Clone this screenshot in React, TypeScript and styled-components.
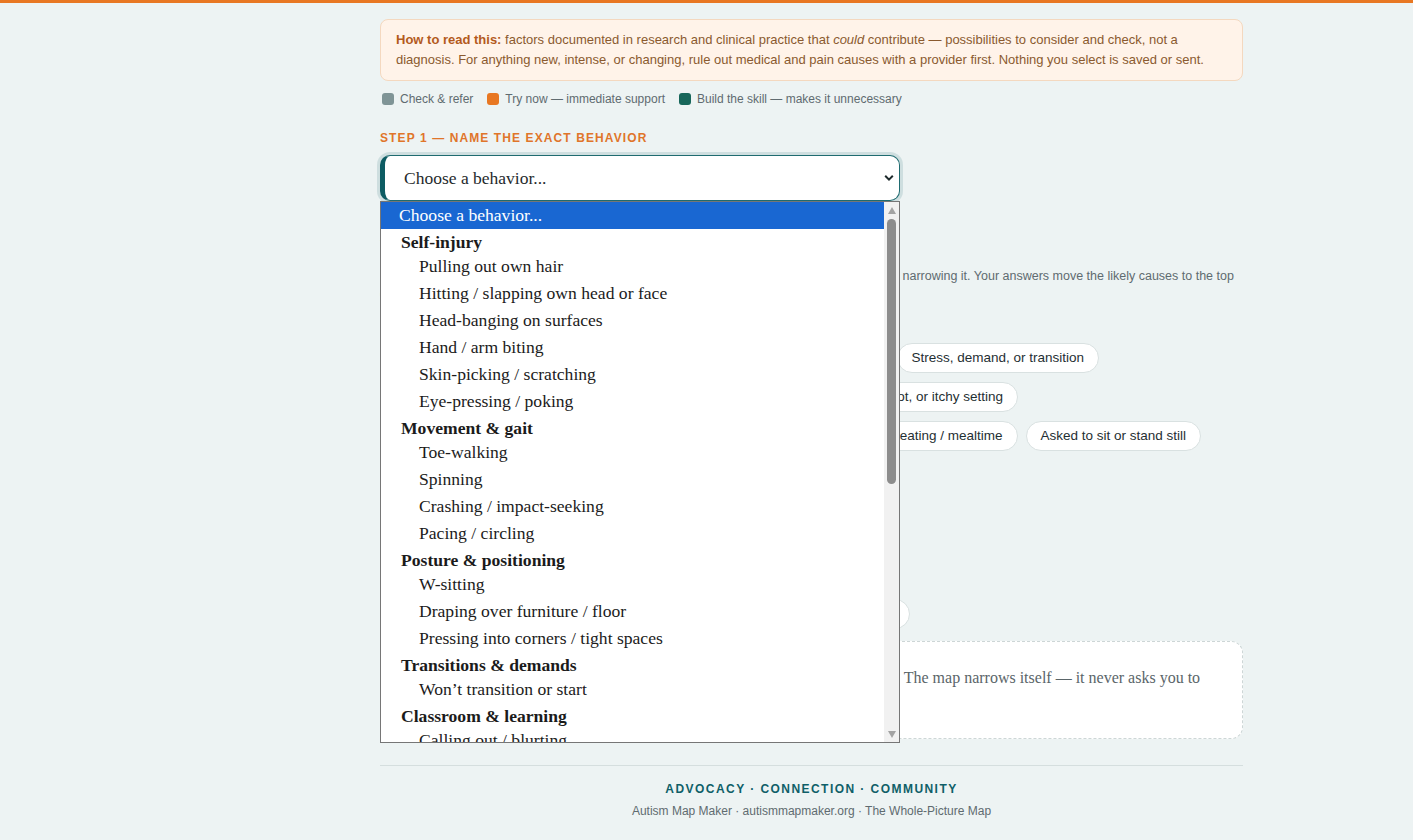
import React from "react";
import styled, { createGlobalStyle } from "styled-components";

const GlobalStyle = createGlobalStyle`
  html, body { margin: 0; padding: 0; background: #edf3f3; }
  body { font-family: "Liberation Sans", Arial, sans-serif; color: #1f2d30; }
  * { box-sizing: border-box; }
`;

const SERIF = `"Liberation Serif", "Times New Roman", serif`;

const TopBar = styled.div`
  height: 3px;
  background: #e87722;
`;

const Shell = styled.div`
  display: grid;
  grid-template-columns: 380px 863px 1fr;
`;

const Main = styled.main`
  grid-column: 2;
  padding: 16px 0 24px;
`;

const Notice = styled.div`
  background: #fff3e9;
  border: 1px solid #f4d8bf;
  border-radius: 8px;
  padding: 10px 15px;
  font-size: 13px;
  line-height: 20px;
  color: #8a5a2f;
  b { color: #b35a1d; }
`;

const Legend = styled.div`
  display: flex;
  gap: 14px;
  margin-top: 11px;
  padding-left: 2px;
  font-size: 12px;
  line-height: 14px;
  color: #5f6b70;
`;

const LegendItem = styled.span`
  display: inline-flex;
  align-items: center;
  gap: 6px;
`;

const Swatch = styled.i<{ $color: string }>`
  display: inline-block;
  width: 12px;
  height: 12px;
  border-radius: 3px;
  background: ${(p) => p.$color};
`;

const StepLabel = styled.div<{ $first?: boolean }>`
  margin-top: ${(p) => (p.$first ? 0 : 24)}px;
  font-size: 12px;
  line-height: 16px;
  font-weight: 700;
  letter-spacing: 1.1px;
  text-transform: uppercase;
  color: #e0752a;
`;

const PickerWrap = styled.div`
  position: relative;
  width: 520px;
  margin-top: 9px;
`;

const Picker = styled.select`
  appearance: none;
  display: block;
  width: 100%;
  height: 46px;
  padding: 0 36px 0 19px;
  background: #fff;
  border: 1px solid #1f6b70;
  border-left: 5px solid #0d5c63;
  border-radius: 10px;
  box-shadow: 0 0 0 3px rgba(20, 100, 108, 0.14);
  font-family: ${SERIF};
  font-size: 17.5px;
  color: #1f2a2c;
  outline: none;
`;

const Chevron = styled.svg`
  position: absolute;
  right: 6px;
  top: 19px;
  width: 10px;
  height: 8px;
  pointer-events: none;
`;

/* the open option list that drops over the page */
const Popup = styled.div`
  position: absolute;
  top: 100%;
  left: 0;
  width: 520px;
  height: 542px;
  z-index: 10;
  display: flex;
  background: #fff;
  border: 1px solid #767676;
`;

const OptionList = styled.div`
  flex: 1;
  overflow: hidden;
  font-family: ${SERIF};
  font-size: 17.6px;
  color: #1b1b1b;
`;

type RowKind = "active" | "group" | "item";

const Row = styled.div<{ $kind: RowKind }>`
  white-space: nowrap;
  ${(p) =>
    p.$kind === "active"
      ? `background:#1967d2;color:#fff;padding-left:18px;line-height:27px;`
      : p.$kind === "group"
      ? `font-weight:700;padding:3px 0 0 20px;line-height:21.1px;`
      : `padding-left:38px;line-height:27px;`}
`;

const ScrollTrack = styled.div`
  width: 15px;
  background: #f1f1f1;
  display: flex;
  flex-direction: column;
  align-items: center;
  padding: 5px 0 4px;
`;

const Arrow = styled.i<{ $down?: boolean }>`
  width: 0;
  height: 0;
  border-left: 4px solid transparent;
  border-right: 4px solid transparent;
  ${(p) => (p.$down ? "border-top: 7px solid #a3a3a3;" : "border-bottom: 7px solid #a3a3a3;")}
`;

const Thumb = styled.i`
  width: 9px;
  height: 265px;
  margin-top: 5px;
  border-radius: 4.5px;
  background: #8c8c8c;
`;

const TrackFill = styled.span`
  flex: 1;
`;

const Section = styled.section`
  margin-top: 30px;
`;

const Lead = styled.p`
  margin: 20px 0 0;
  font-size: 12.5px;
  line-height: 18px;
  color: #5f6b70;
`;

const Group = styled.div<{ $gap: number }>`
  margin-top: ${(p) => p.$gap}px;
`;

const GroupLabel = styled.div`
  font-size: 11px;
  line-height: 14px;
  font-weight: 700;
  letter-spacing: 1px;
  text-transform: uppercase;
  color: #5f6b70;
`;

const Chips = styled.div`
  display: flex;
  flex-wrap: wrap;
  gap: 9px 8px;
  margin-top: 11px;
`;

const Chip = styled.button`
  font-family: inherit;
  font-size: 13.5px;
  line-height: 16px;
  padding: 6px 14px;
  border: 1px solid #d9e1e1;
  border-radius: 15px;
  background: #fff;
  color: #1f2f33;
  cursor: pointer;
`;

const Placeholder = styled.div`
  margin-top: 12px;
  padding: 24px;
  background: #fff;
  border: 1px dashed #cdd6d6;
  border-radius: 12px;
  font-family: ${SERIF};
  font-size: 16px;
  line-height: 24px;
  color: #5a6569;
`;

const Footer = styled.footer`
  margin-top: 26px;
  border-top: 1px solid #d5dede;
  padding-top: 15px;
  text-align: center;
`;

const Motto = styled.div`
  font-size: 12px;
  line-height: 16px;
  font-weight: 700;
  letter-spacing: 1.45px;
  color: #0f5f68;
`;

const Credit = styled.div`
  margin-top: 6px;
  font-size: 12px;
  line-height: 16px;
  color: #5f6b70;
`;

type BehaviorGroup = { label: string; items: string[] };

const behaviors: BehaviorGroup[] = [
  {
    label: "Self-injury",
    items: [
      "Pulling out own hair",
      "Hitting / slapping own head or face",
      "Head-banging on surfaces",
      "Hand / arm biting",
      "Skin-picking / scratching",
      "Eye-pressing / poking",
    ],
  },
  {
    label: "Movement & gait",
    items: ["Toe-walking", "Spinning", "Crashing / impact-seeking", "Pacing / circling"],
  },
  {
    label: "Posture & positioning",
    items: ["W-sitting", "Draping over furniture / floor", "Pressing into corners / tight spaces"],
  },
  { label: "Transitions & demands", items: ["Won\u2019t transition or start"] },
  {
    label: "Classroom & learning",
    items: ["Calling out / blurting", "Leaving the seat", "Refusing written work"],
  },
];

const moments = [
  "Alone or with nothing to do",
  "Told no or a toy taken away",
  "Tired or achy",
  "Stress, demand, or transition",
  "Just after waking or before bed",
  "Attention goes to a sibling",
  "Loud, bright, hot, or itchy setting",
  "During seated work or screen time",
  "Washing or dressing",
  "Before or during eating / mealtime",
  "Asked to sit or stand still",
];

const places = ["At home", "At school", "In the car", "In public"];
const frequency = ["Several times a day", "Once a day", "A few times a week", "Now and then"];

export default function App() {
  return (
    <>
      <GlobalStyle />
      <TopBar />
      <Shell>
        <Main>
          <Notice>
            <b>How to read this:</b> factors documented in research and clinical practice that{" "}
            <i>could</i> contribute — possibilities to consider and check, not a diagnosis. For
            anything new, intense, or changing, rule out medical and pain causes with a provider
            first. Nothing you select is saved or sent.
          </Notice>

          <Legend>
            <LegendItem>
              <Swatch $color="#7f9496" />
              Check &amp; refer
            </LegendItem>
            <LegendItem>
              <Swatch $color="#e87722" />
              Try now — immediate support
            </LegendItem>
            <LegendItem>
              <Swatch $color="#17665a" />
              Build the skill — makes it unnecessary
            </LegendItem>
          </Legend>

          <StepLabel>Step 1 — Name the exact behavior</StepLabel>
          <PickerWrap>
            <Picker defaultValue="" aria-label="Behavior">
              <option value="">Choose a behavior...</option>
              {behaviors.map((g) => (
                <optgroup key={g.label} label={g.label}>
                  {g.items.map((it) => (
                    <option key={it}>{it}</option>
                  ))}
                </optgroup>
              ))}
            </Picker>
            <Chevron viewBox="0 0 10 8">
              <path d="M1.2 1.8 L5 5.6 L8.8 1.8" fill="none" stroke="#1e2a2c" strokeWidth="2" />
            </Chevron>

            <Popup role="listbox">
              <OptionList>
                <Row $kind="active">Choose a behavior...</Row>
                {behaviors.map((g) => (
                  <React.Fragment key={g.label}>
                    <Row $kind="group">{g.label}</Row>
                    {g.items.map((it) => (
                      <Row $kind="item" key={it}>
                        {it}
                      </Row>
                    ))}
                  </React.Fragment>
                ))}
              </OptionList>
              <ScrollTrack>
                <Arrow />
                <Thumb />
                <TrackFill />
                <Arrow $down />
              </ScrollTrack>
            </Popup>
          </PickerWrap>

          <Section>
            <StepLabel $first>Step 2 — When does it show up?</StepLabel>
            <Lead>
              Pick all that match what you’ve seen. Nothing rules a cause out — it sorts the map
              rather than narrowing it. Your answers move the likely causes to the top of the list,
              so you can start there.
            </Lead>

            <Group $gap={15}>
              <GroupLabel>Moments</GroupLabel>
              <Chips>
                {moments.map((m) => (
                  <Chip key={m}>{m}</Chip>
                ))}
              </Chips>
            </Group>

            <Group $gap={34}>
              <GroupLabel>Places</GroupLabel>
              <Chips>
                {places.map((m) => (
                  <Chip key={m}>{m}</Chip>
                ))}
              </Chips>
            </Group>

            <Group $gap={34}>
              <GroupLabel>How often</GroupLabel>
              <Chips>
                {frequency.map((m) => (
                  <Chip key={m}>{m}</Chip>
                ))}
              </Chips>
            </Group>
          </Section>

          <Placeholder>
            Choose a behavior above to see what may be behind it, most likely ones first. The map
            narrows itself — it never asks you to diagnose anything.
          </Placeholder>

          <Footer>
            <Motto>ADVOCACY · CONNECTION · COMMUNITY</Motto>
            <Credit>Autism Map Maker · autismmapmaker.org · The Whole-Picture Map</Credit>
          </Footer>
        </Main>
      </Shell>
    </>
  );
}
